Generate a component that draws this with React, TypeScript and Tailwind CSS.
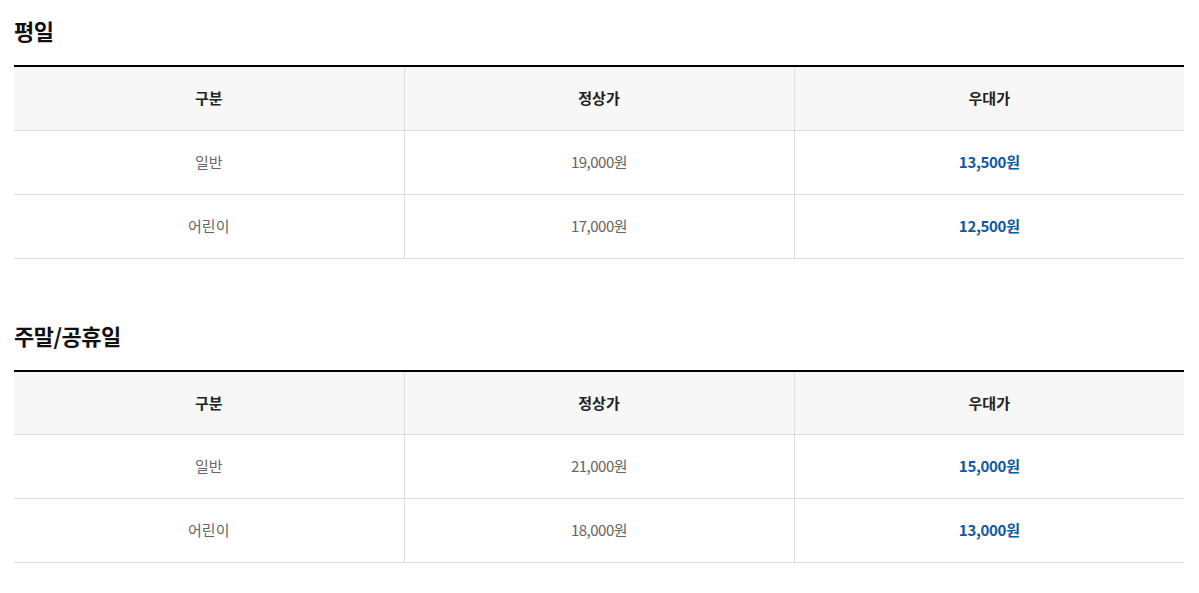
const sections = [
  {
    title: "평일",
    rows: [
      { name: "일반", normal: "19,000원", sale: "13,500원" },
      { name: "어린이", normal: "17,000원", sale: "12,500원" },
    ],
  },
  {
    title: "주말/공휴일",
    rows: [
      { name: "일반", normal: "21,000원", sale: "15,000원" },
      { name: "어린이", normal: "18,000원", sale: "13,000원" },
    ],
  },
];

function PriceTable({ title, rows }: (typeof sections)[number]) {
  return (
    <section className="mb-[61px]">
      <h3 className="mb-[20px] text-[22px] font-bold leading-[30px] tracking-[-0.5px] text-[#111]">{title}</h3>
      <table className="w-full table-fixed border-collapse border-t-2 border-t-black text-[15px]">
        <thead>
          <tr className="h-[64px] bg-[#f7f7f7] border-b border-[#dddddd]">
            <th className="border-r border-[#dddddd] font-bold text-[#222]">구분</th>
            <th className="border-r border-[#dddddd] font-bold text-[#222]">정상가</th>
            <th className="font-bold text-[#222]">우대가</th>
          </tr>
        </thead>
        <tbody>
          {rows.map((r) => (
            <tr key={r.name} className="h-[64px] border-b border-[#dddddd]">
              <td className="border-r border-[#dddddd] text-center text-[#666]">{r.name}</td>
              <td className="border-r border-[#dddddd] text-center tracking-[-0.5px] text-[#666]">{r.normal}</td>
              <td className="text-center font-bold tracking-[-0.3px] text-[#0b5aa6]">{r.sale}</td>
            </tr>
          ))}
        </tbody>
      </table>
    </section>
  );
}

export default function App() {
  return (
    <div
      className="min-h-screen bg-white pl-[14px] pt-[15px] w-[1184px]"
      style={{ fontFamily: '"Noto Sans CJK KR", "Noto Sans", sans-serif' }}
    >
      {sections.map((s) => (
        <PriceTable key={s.title} {...s} />
      ))}
    </div>
  );
}
